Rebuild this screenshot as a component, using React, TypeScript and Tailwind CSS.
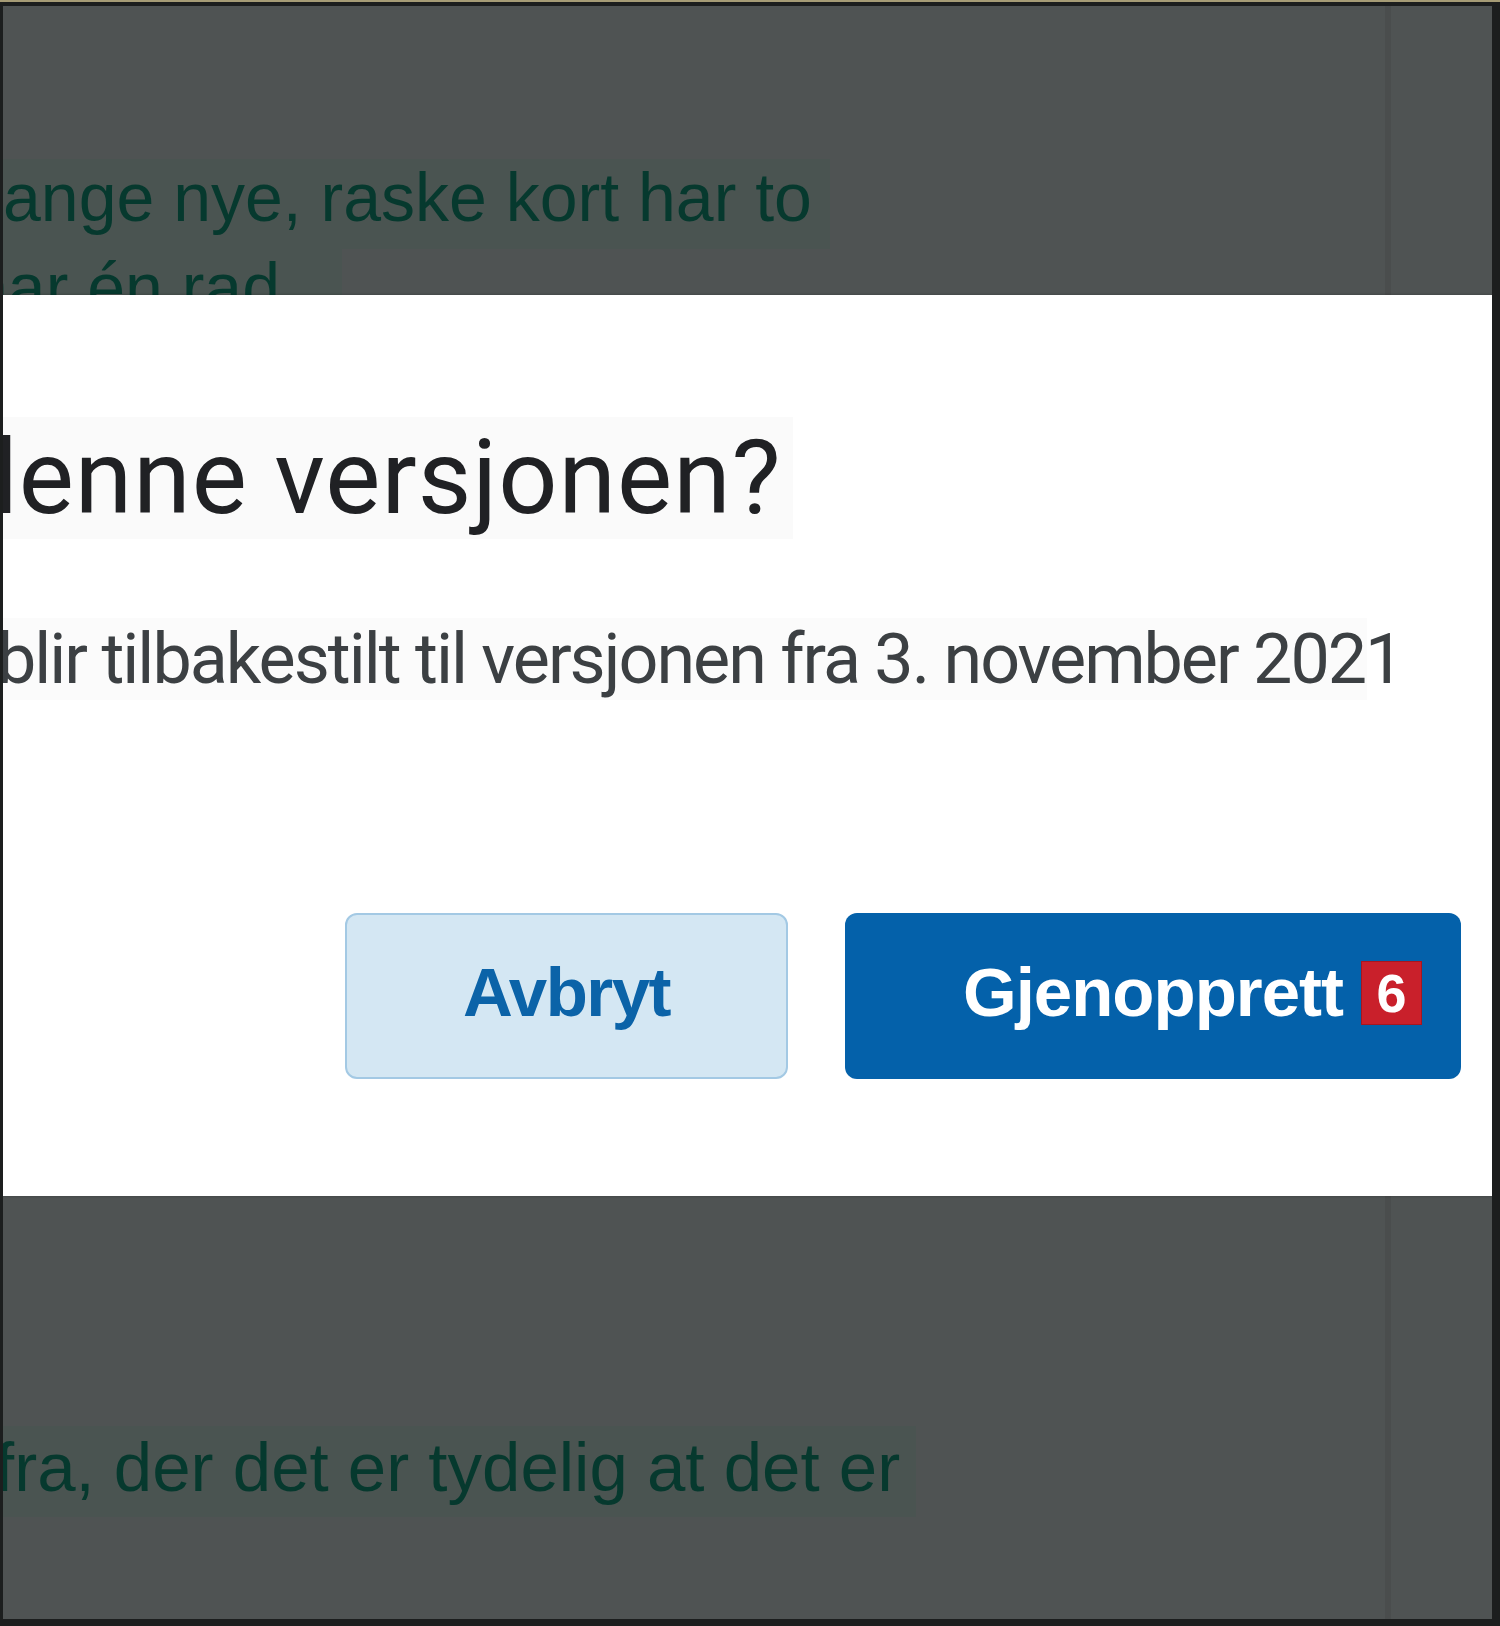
import React from "react";

// Restore-version dialog over a dimmed document page
const HL = "bg-[#4a5451]";

function PageLine({
  text,
  className,
  textClass,
}: {
  text: string;
  className: string;
  textClass?: string;
}) {
  return (
    <div className={`${HL} overflow-hidden shrink-0 ${className}`}>
      <p
        className={`whitespace-nowrap text-[#06392e] font-['Liberation_Sans',Arial,sans-serif] ${textClass ?? "text-[68px] leading-[76px]"}`}
      >
        {text}
      </p>
    </div>
  );
}

export default function App() {
  return (
    <div className="w-[1500px] h-[1626px] bg-[#1c1e1e] flex flex-col overflow-hidden">
      <div className="h-[2px] bg-[#a69c76] shrink-0" />
      <div className="relative flex-1 mt-[4px] mb-[7px] ml-[3px] mr-[8px] bg-[#4f5353] flex flex-col overflow-hidden">
        {/* faint scroll edge */}
        <div className="absolute inset-y-0 left-[1382px] w-[6px] bg-[#4a4d4d]" />

        <div className="h-[153px] shrink-0" />
        <PageLine text="ange nye, raske kort har to" className="h-[90px] w-[827px]" />
        <PageLine
          text="har én rad"
          className="h-[46px] w-[339px]"
          textClass="text-[68px] leading-[76px] -ml-[33px]"
        />

        {/* Dialog */}
        <div className="relative z-10 h-[901px] shrink-0 bg-white flex flex-col overflow-hidden shadow-[0_0_3px_rgba(0,0,0,0.25)]">
          <div className="pt-[122px]">
            <h2 className="w-[834px] -ml-[44px] bg-[#fafafa] whitespace-nowrap text-[104px] leading-[122px] tracking-[1px] text-[#202124] font-['Roboto',sans-serif]">
              denne versjonen?
            </h2>
          </div>
          <p className="mt-[79px] w-[1370px] bg-[#fbfbfb] whitespace-nowrap text-[70px] leading-[82px] tracking-[-2px] text-[#3c4043] font-['Roboto',sans-serif] -ml-[6px]">
            blir tilbakestilt til versjonen fra 3. november 2021
          </p>

          <div className="mt-[213px] flex justify-end gap-[57px] pr-[31px]">
            <button className="w-[443px] h-[166px] pb-[6px] rounded-[12px] border-2 border-[#a3c9e4] bg-[#d4e7f3] flex items-center justify-center text-[69px] font-bold tracking-[-1.5px] text-[#0b63a8] font-['Liberation_Sans',Arial,sans-serif]">
              Avbryt
            </button>
            <button className="w-[616px] h-[166px] pb-[6px] rounded-[12px] bg-[#0461aa] flex items-center justify-center text-[69px] font-bold tracking-[-1px] text-white font-['Liberation_Sans',Arial,sans-serif]">
              <span className="relative">
                Gjenopprett
                <span className="absolute left-full top-1/2 -translate-y-1/2 ml-[18px] w-[61px] h-[64px] bg-[#c9202b] border border-[#a8161f] flex items-center justify-center text-[54px] leading-none text-white font-bold tracking-normal">
                  6
                </span>
              </span>
            </button>
          </div>
        </div>

        <PageLine
          text="fra, der det er tydelig at det er"
          className="mt-[230px] h-[91px] w-[913px]"
          textClass="text-[69px] leading-[83px] -ml-[8px]"
        />
      </div>
    </div>
  );
}
